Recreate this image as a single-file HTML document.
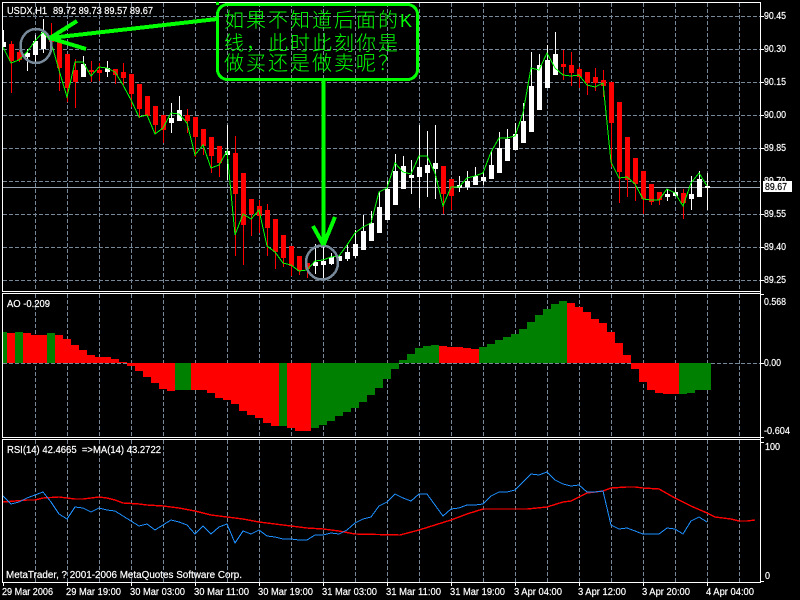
<!DOCTYPE html>
<html><head><meta charset="utf-8"><style>
html,body{margin:0;padding:0;background:#000;width:800px;height:600px;overflow:hidden}
svg{display:block}
text{font-family:"Liberation Sans",sans-serif;font-size:10px;fill:#fff;stroke:#fff;stroke-width:.2}
.cn{font-family:"Liberation Sans","Noto Sans CJK SC",sans-serif;font-size:20px;fill:#00ff00;stroke:none;font-weight:300}
</style></head><body>
<svg width="800" height="600" viewBox="0 0 800 600" xmlns="http://www.w3.org/2000/svg">
<rect width="800" height="600" fill="#000"/>
<g fill="none" stroke="#778899" stroke-dasharray="4 2" shape-rendering="crispEdges">
<path d="M3 16.5H760M3 49.5H760M3 82.5H760M3 115.5H760M3 148.5H760M3 181.5H760M3 214.5H760M3 247.5H760M3 280.5H760"/>
<path d="M35.5 3V291M67.5 3V291M99.5 3V291M131.5 3V291M163.5 3V291M195.5 3V291M227.5 3V291M259.5 3V291M291.5 3V291M323.5 3V291M355.5 3V291M387.5 3V291M419.5 3V291M451.5 3V291M483.5 3V291M515.5 3V291M547.5 3V291M579.5 3V291M611.5 3V291M643.5 3V291M675.5 3V291M707.5 3V291M739.5 3V291"/>
<path d="M35.5 294V437M67.5 294V437M99.5 294V437M131.5 294V437M163.5 294V437M195.5 294V437M227.5 294V437M259.5 294V437M291.5 294V437M323.5 294V437M355.5 294V437M387.5 294V437M419.5 294V437M451.5 294V437M483.5 294V437M515.5 294V437M547.5 294V437M579.5 294V437M611.5 294V437M643.5 294V437M675.5 294V437M707.5 294V437M739.5 294V437"/>
<path d="M35.5 440V582M67.5 440V582M99.5 440V582M131.5 440V582M163.5 440V582M195.5 440V582M227.5 440V582M259.5 440V582M291.5 440V582M323.5 440V582M355.5 440V582M387.5 440V582M419.5 440V582M451.5 440V582M483.5 440V582M515.5 440V582M547.5 440V582M579.5 440V582M611.5 440V582M643.5 440V582M675.5 440V582M707.5 440V582M739.5 440V582"/>
<path d="M3 363.5H760"/>
</g>
<path d="M3 187.5H760" stroke="#9aa5b1" shape-rendering="crispEdges"/>
<g shape-rendering="crispEdges">
<path fill="none" stroke="#fff" d="M3.5 30V47M27.5 49V71M35.5 35V64M43.5 19V53M83.5 56V77M107.5 61V77M171.5 103V133M179.5 96V121M227.5 125V180M315.5 244V274M323.5 245V278M331.5 253V265M339.5 256V261M347.5 244V261M355.5 230V258M363.5 215V250M371.5 211V241M379.5 192V233M387.5 181V220M395.5 154V205M403.5 156V189M411.5 160V194M419.5 125V208M427.5 131V197M435.5 125V199M459.5 176V192M467.5 171V190M475.5 167V185M483.5 171V185M491.5 151V179M499.5 132V173M507.5 129V161M515.5 123V150M523.5 103V143M531.5 52V132M539.5 54V110M547.5 45V88M555.5 32V75M667.5 189V201M675.5 187V196M691.5 176V210M699.5 171V197M707.5 173V210"/>
<path fill="#fff" d="M3 42h3v5h-3zM25 53h5v4h-5zM33 41h5v14h-5zM41 32h5v17h-5zM81 64h5v13h-5zM105 68h5v4h-5zM169 118h5v5h-5zM177 110h5v11h-5zM225 151h5v4h-5zM313 262h5v4h-5zM321 261h5v4h-5zM329 257h5v7h-5zM337 256h5v5h-5zM345 252h5v7h-5zM353 244h5v12h-5zM361 231h5v19h-5zM369 223h5v18h-5zM377 207h5v26h-5zM385 189h5v31h-5zM393 171h5v34h-5zM401 166h5v23h-5zM409 175h5v3h-5zM417 167h5v10h-5zM425 165h5v8h-5zM433 163h5v6h-5zM457 185h5v3h-5zM465 181h5v6h-5zM473 176h5v9h-5zM481 177h5v4h-5zM489 165h5v14h-5zM497 148h5v25h-5zM505 139h5v22h-5zM513 134h5v16h-5zM521 121h5v22h-5zM529 86h5v46h-5zM537 65h5v45h-5zM545 60h5v28h-5zM553 54h5v21h-5zM665 194h5v3h-5zM673 192h5v4h-5zM689 194h5v5h-5zM697 179h5v18h-5zM705 186h5v2h-5z"/>
<path fill="none" stroke="#f00" d="M11.5 41V93M19.5 50V62M51.5 23V42M59.5 42V91M67.5 54V102M75.5 59V108M91.5 61V82M99.5 63V81M115.5 69V84M123.5 63V85M131.5 74V107M139.5 84V118M147.5 96V116M155.5 106V133M163.5 115V143M187.5 109V133M195.5 117V157M203.5 129V155M211.5 137V173M219.5 146V177M235.5 136V256M243.5 173V265M251.5 199V236M259.5 200V233M267.5 204V256M275.5 219V269M283.5 235V267M291.5 246V276M299.5 256V275M307.5 263V278M443.5 166V214M451.5 179V210M563.5 50V80M571.5 52V86M579.5 67V88M587.5 72V95M595.5 68V91M603.5 70V97M611.5 82V167M619.5 102V203M627.5 137V197M635.5 158V201M643.5 171V214M651.5 184V205M659.5 192V205M683.5 189V219"/>
<path fill="#f00" d="M9 44h5v17h-5zM17 52h5v8h-5zM49 38h5v4h-5zM57 42h5v26h-5zM65 54h5v34h-5zM73 70h5v12h-5zM89 70h5v2h-5zM97 70h5v3h-5zM113 69h5v6h-5zM121 72h5v6h-5zM129 74h5v20h-5zM137 84h5v25h-5zM145 96h5v20h-5zM153 106h5v19h-5zM161 115h5v15h-5zM185 115h5v6h-5zM193 117h5v20h-5zM201 129h5v17h-5zM209 137h5v19h-5zM217 146h5v17h-5zM233 153h5v41h-5zM241 173h5v52h-5zM249 199h5v15h-5zM257 206h5v10h-5zM265 210h5v18h-5zM273 219h5v33h-5zM281 235h5v23h-5zM289 246h5v20h-5zM297 256h5v15h-5zM305 263h5v6h-5zM441 166h5v28h-5zM449 179h5v17h-5zM561 64h5v3h-5zM569 65h5v8h-5zM577 69h5v8h-5zM585 72h5v11h-5zM593 77h5v6h-5zM601 80h5v6h-5zM609 82h5v41h-5zM617 102h5v70h-5zM625 137h5v43h-5zM633 158h5v26h-5zM641 171h5v28h-5zM649 184h5v18h-5zM657 192h5v8h-5zM681 193h5v10h-5z"/>
<polyline fill="none" stroke="#0f0" points="3,47 11,63 19,60 27,52 35,41 43,32 51,42 59,70 67,97 75,62 83,62 91,76 99,67 107,68 115,72 123,85 131,100 139,117 147,115 155,134 163,128 171,113 179,114 187,123 195,155 203,145 211,168 219,165 227,151 235,235 243,214 251,219 259,210 267,246 275,252 283,263 291,265 299,271 307,270 315,261 323,260 331,257 339,256 347,245 355,233 363,227 371,223 379,192 387,188 395,163 403,172 411,174 419,156 427,156 435,173 443,206 451,187 459,187 467,178 475,176 483,173 491,152 499,138 507,138 515,136 523,113 531,68 539,70 547,53 555,68 563,75 571,76 579,75 587,85 595,87 603,83 611,162 619,178 627,177 635,184 643,199 651,200 659,200 667,189 675,193 683,206 691,183 699,173 707,186"/>
<path fill="#f00" d="M7 333h8V363h-8zM23 333h8V363h-8zM31 335h8V363h-8zM39 335h8V363h-8zM55 335h8V363h-8zM63 339h8V363h-8zM71 345h8V363h-8zM79 350h8V363h-8zM87 355h8V363h-8zM95 357h8V363h-8zM103 357h8V363h-8zM111 359h8V363h-8zM119 362h8V363h-8zM127 363h8V366h-8zM135 363h8V371h-8zM143 363h8V377h-8zM151 363h8V383h-8zM159 363h8V389h-8zM167 363h8V391h-8zM191 363h8V390h-8zM199 363h8V390h-8zM207 363h8V393h-8zM215 363h8V398h-8zM223 363h8V400h-8zM231 363h8V404h-8zM239 363h8V411h-8zM247 363h8V415h-8zM255 363h8V418h-8zM263 363h8V423h-8zM271 363h8V426h-8zM287 363h8V428h-8zM295 363h8V431h-8zM303 363h8V431h-8zM439 346h8V363h-8zM447 347h8V363h-8zM455 347h8V363h-8zM463 348h8V363h-8zM471 349h8V363h-8zM567 303h8V363h-8zM575 307h8V363h-8zM583 312h8V363h-8zM591 319h8V363h-8zM599 323h8V363h-8zM607 332h8V363h-8zM615 343h8V363h-8zM623 355h8V363h-8zM631 363h8V369h-8zM639 363h8V382h-8zM647 363h8V390h-8zM655 363h8V393h-8zM663 363h8V394h-8zM671 363h8V394h-8z" />
<path fill="#008000" d="M3 332h4V363h-4zM15 332h8V363h-8zM47 333h8V363h-8zM175 363h8V390h-8zM183 363h8V390h-8zM279 363h8V426h-8zM311 363h8V428h-8zM319 363h8V425h-8zM327 363h8V421h-8zM335 363h8V416h-8zM343 363h8V412h-8zM351 363h8V408h-8zM359 363h8V402h-8zM367 363h8V395h-8zM375 363h8V388h-8zM383 363h8V379h-8zM391 363h8V369h-8zM399 360h8V363h-8zM407 354h8V363h-8zM415 348h8V363h-8zM423 346h8V363h-8zM431 345h8V363h-8zM479 347h8V363h-8zM487 344h8V363h-8zM495 340h8V363h-8zM503 337h8V363h-8zM511 334h8V363h-8zM519 329h8V363h-8zM527 322h8V363h-8zM535 315h8V363h-8zM543 309h8V363h-8zM551 304h8V363h-8zM559 301h8V363h-8zM679 363h8V394h-8zM687 363h8V393h-8zM695 363h8V390h-8zM703 363h8V390h-8z"/>
<polyline fill="none" stroke="#f00" stroke-width="1.4" points="3,502 27,500 35,500 43,498 59,497 75,499 83,499 99,497 107,498 115,500 123,503 139,504 147,505 163,506 179,508 195,511 211,515 227,517 243,519 259,522 275,524 291,526 307,528 323,529 339,531 355,534 400,535 419,530 435,525 451,520 467,514 483,509 499,509 527,509 547,507 563,502 571,501 587,493 603,491 611,488 627,487 635,487 643,488 659,489 675,498 691,506 707,513 715,517 731,519 739,521 747,521 755,520"/>
<polyline fill="none" stroke="#1e90ff" points="3,496 11,504 19,502 27,498 35,495 43,492 51,502 59,514 67,519 75,507 83,508 91,512 99,508 107,510 115,511 123,516 131,521 139,526 147,524 155,530 163,525 171,520 179,522 187,525 195,534 203,526 211,534 219,527 227,524 235,543 243,531 251,534 259,530 267,536 275,537 283,539 291,539 299,540 307,540 315,535 323,535 331,533 339,534 347,530 355,523 363,519 371,517 379,506 387,502 395,494 403,498 411,501 419,494 427,494 435,505 443,516 451,509 459,508 467,505 475,505 483,504 491,496 499,492 507,492 515,490 523,482 531,474 539,475 547,472 555,480 563,484 571,486 579,485 587,492 595,492 603,491 611,525 619,529 627,528 635,531 643,534 651,534 659,534 667,528 675,529 683,534 691,521 699,517 707,522"/>
<g fill="none" stroke="#fff">
<path d="M2.5 2V291.5M2.5 293V437.5M2.5 439V582.5M2 2.5H760.5M2 291.5H760.5M2 293.5H760.5M2 437.5H760.5M2 439.5H760.5M2 582.5H760.5M760.5 2V583"/>
<path d="M761 16.5h3M761 49.5h3M761 82.5h3M761 115.5h3M761 148.5h3M761 214.5h3M761 247.5h3M761 280.5h3M761 294.5h3M761 363.5h3M761 437.5h3M761 442.5h3M761 581.5h3"/>
<path d="M3.5 583v3M67.5 583v3M131.5 583v3M195.5 583v3M259.5 583v3M323.5 583v3M387.5 583v3M451.5 583v3M515.5 583v3M579.5 583v3M643.5 583v3M707.5 583v3"/>
</g>
<g fill="none" stroke="#778899" stroke-width="2.5">
<ellipse cx="36" cy="46" rx="15.5" ry="17"/>
<ellipse cx="322" cy="262.5" rx="16" ry="17"/>
</g>
<g fill="none" stroke="#0f0" stroke-width="4">
<path d="M217 19L50 38M50 38L77 21M50 38L86 49"/>
<path d="M323.5 80V245M323.5 245L313 226M323.5 245L335 217"/>
</g>
<g fill="none" stroke="#0f0" stroke-width="3">
<rect x="217.5" y="4.5" width="200" height="75" rx="10" ry="10"/>
</g>
<path d="M216 2h3v3h-3z" fill="#0f0"/>
</g>
<text x="224" y="27" class="cn" letter-spacing="2">如果不知道后面的<tspan font-size="18" font-weight="200">K</tspan></text>
<text x="224" y="50" class="cn" letter-spacing="2">线，此时此刻你是</text>
<text x="224" y="70" class="cn" letter-spacing="2">做买还是做卖呢？</text>

<text x="7" y="14" textLength="40" lengthAdjust="spacingAndGlyphs">USDX,H1</text>
<text x="53" y="14" textLength="100" lengthAdjust="spacingAndGlyphs">89.72 89.73 89.57 89.67</text>
<text x="7" y="307" textLength="43" lengthAdjust="spacingAndGlyphs">AO -0.209</text>
<text x="7" y="453" textLength="154" lengthAdjust="spacingAndGlyphs">RSI(14) 42.4665 &#160;=&gt;MA(14) 43.2722</text>
<text x="6" y="578" textLength="236" lengthAdjust="spacingAndGlyphs">MetaTrader, ? 2001-2006 MetaQuotes Software Corp.</text>

<g>
<text x="764" y="19" textLength="22" lengthAdjust="spacingAndGlyphs">90.45</text>
<text x="764" y="52" textLength="22" lengthAdjust="spacingAndGlyphs">90.30</text>
<text x="764" y="85" textLength="22" lengthAdjust="spacingAndGlyphs">90.15</text>
<text x="764" y="118" textLength="22" lengthAdjust="spacingAndGlyphs">90.00</text>
<text x="764" y="151" textLength="22" lengthAdjust="spacingAndGlyphs">89.85</text>
<text x="764" y="184" textLength="22" lengthAdjust="spacingAndGlyphs">89.70</text>
<text x="764" y="217" textLength="22" lengthAdjust="spacingAndGlyphs">89.55</text>
<text x="764" y="250" textLength="22" lengthAdjust="spacingAndGlyphs">89.40</text>
<text x="764" y="283" textLength="22" lengthAdjust="spacingAndGlyphs">89.25</text>
</g>
<rect x="763" y="181" width="29" height="11" fill="#fff"/>
<text x="765" y="190" textLength="22" lengthAdjust="spacingAndGlyphs" style="fill:#000;stroke:#000">89.67</text>

<text x="764" y="305" textLength="22" lengthAdjust="spacingAndGlyphs">0.568</text>
<text x="764" y="366" textLength="17" lengthAdjust="spacingAndGlyphs">0.00</text>
<text x="764" y="434" textLength="26" lengthAdjust="spacingAndGlyphs">-0.604</text>
<text x="765" y="450" textLength="15" lengthAdjust="spacingAndGlyphs">100</text>
<text x="765" y="579" textLength="5" lengthAdjust="spacingAndGlyphs">0</text>

<g>
<text x="2" y="595" textLength="51" lengthAdjust="spacingAndGlyphs">29 Mar 2006</text>
<text x="66" y="595" textLength="55" lengthAdjust="spacingAndGlyphs">29 Mar 19:00</text>
<text x="130" y="595" textLength="55" lengthAdjust="spacingAndGlyphs">30 Mar 03:00</text>
<text x="194" y="595" textLength="55" lengthAdjust="spacingAndGlyphs">30 Mar 11:00</text>
<text x="258" y="595" textLength="55" lengthAdjust="spacingAndGlyphs">30 Mar 19:00</text>
<text x="322" y="595" textLength="55" lengthAdjust="spacingAndGlyphs">31 Mar 03:00</text>
<text x="386" y="595" textLength="55" lengthAdjust="spacingAndGlyphs">31 Mar 11:00</text>
<text x="450" y="595" textLength="55" lengthAdjust="spacingAndGlyphs">31 Mar 19:00</text>
<text x="514" y="595" textLength="48" lengthAdjust="spacingAndGlyphs">3 Apr 04:00</text>
<text x="578" y="595" textLength="48" lengthAdjust="spacingAndGlyphs">3 Apr 12:00</text>
<text x="642" y="595" textLength="48" lengthAdjust="spacingAndGlyphs">3 Apr 20:00</text>
<text x="706" y="595" textLength="48" lengthAdjust="spacingAndGlyphs">4 Apr 04:00</text>
</g>
</svg>
</body></html>
